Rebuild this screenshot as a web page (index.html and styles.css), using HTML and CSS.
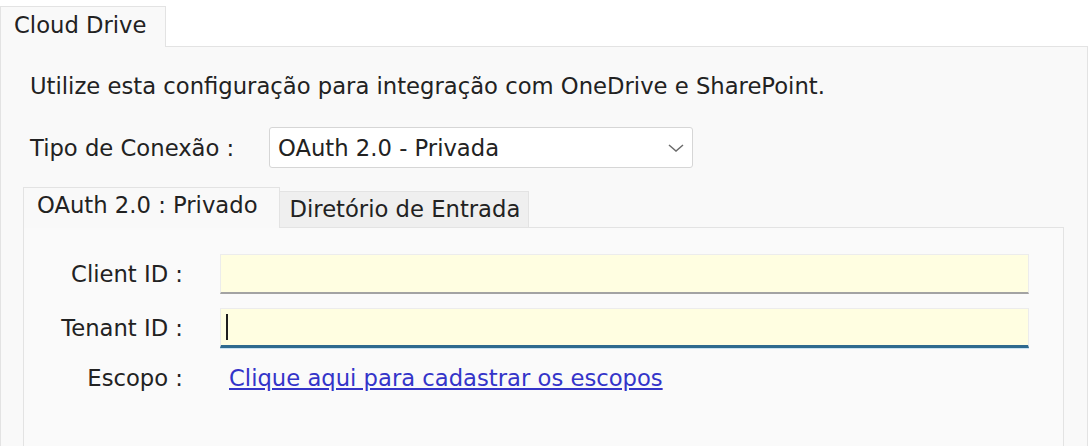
FILE: index.html
```html
<!DOCTYPE html>
<html lang="pt">
<head>
<meta charset="utf-8">
<title>Cloud Drive</title>
<link rel="stylesheet" href="styles.css">
</head>
<body>
<div class="page">
  <div class="outer">
    <div class="tabbar">
      <div class="tab">Cloud Drive</div>
      <div class="tab-fill"></div>
    </div>
    <div class="panel">
      <p class="desc">Utilize esta configuração para integração com OneDrive e SharePoint.</p>
      <div class="conn-row">
        <span class="conn-label">Tipo de Conexão :</span>
        <div class="select">
          <span>OAuth 2.0 - Privada</span>
          <svg class="chev" width="16" height="8" viewBox="0 0 16 8"><polyline points="1,1 8,7 15,1" fill="none" stroke="#6b6b6b" stroke-width="1.5"/></svg>
        </div>
      </div>
      <div class="inner">
        <div class="inner-tabbar">
          <div class="itab itab-active">OAuth 2.0 : Privado</div>
          <div class="itab itab-idle">Diretório de Entrada</div>
          <div class="itab-fill"></div>
        </div>
        <div class="inner-panel">
          <div class="form">
            <label class="flabel">Client ID :</label>
            <div class="field"></div>
            <label class="flabel">Tenant ID :</label>
            <div class="field field-focus"><span class="caret"></span></div>
            <label class="flabel flabel-link">Escopo :</label>
            <a class="link" href="#">Clique aqui para cadastrar os escopos</a>
          </div>
        </div>
      </div>
    </div>
  </div>
</div>
</body>
</html>
```

FILE: styles.css
```css
html, body {
  margin: 0;
  padding: 0;
  background: #ffffff;
}
body {
  font-family: "DejaVu Sans", Verdana, sans-serif;
  font-size: 22.7px;
  line-height: 26px;
  color: #222222;
}
.page {
  padding-top: 6px;
  height: 440px;
  overflow: hidden;
}
.outer {
  width: 1088px;
}
.tabbar {
  display: flex;
}
.tab {
  border: 1px solid #e3e3e3;
  border-bottom: none;
  background: #f9f9f9;
  padding: 5px 18px 9px 13px;
  white-space: nowrap;
}
.tab-fill {
  flex: 1;
  border-bottom: 1px solid #e3e3e3;
}
.panel {
  border: 1px solid #e3e3e3;
  border-top: none;
  background: #f9f9f9;
  padding: 26px 23px 0 22px;
  height: 420px;
}
.desc {
  margin: 0 0 28px;
  padding-left: 7px;
}
.conn-row {
  display: flex;
  align-items: center;
  padding-left: 7px;
}
.conn-label {
  width: 239px;
  white-space: nowrap;
}
.select {
  box-sizing: border-box;
  width: 424px;
  height: 41px;
  border: 1px solid #d6d6d6;
  border-radius: 3px;
  background: #ffffff;
  display: flex;
  align-items: center;
  justify-content: space-between;
  padding: 0 8px;
}
.chev {
  display: block;
}
.inner {
  margin-top: 19px;
}
.inner-tabbar {
  display: flex;
  align-items: flex-end;
}
.itab {
  white-space: nowrap;
  border: 1px solid #e3e3e3;
}
.itab-active {
  border-bottom: none;
  background: #f9f9f9;
  padding: 4px 21px 10px 13px;
}
.itab-idle {
  border-left: none;
  background: #efefef;
  padding: 4px 8px 5px 10px;
}
.itab-fill {
  flex: 1;
  align-self: stretch;
  border-bottom: 1px solid #e3e3e3;
}
.inner-panel {
  border: 1px solid #e3e3e3;
  border-top: none;
  background: #fafafa;
  padding: 26px 34px 0 0;
  height: 200px;
}
.form {
  display: grid;
  grid-template-columns: 159px 1fr;
  column-gap: 37px;
  row-gap: 14px;
  align-items: center;
}
.flabel {
  text-align: right;
  white-space: nowrap;
}
.flabel-link {
  margin-top: 3px;
}
.field {
  box-sizing: border-box;
  height: 40px;
  background: #fffee1;
  border: 1px solid #ececec;
  border-bottom: 2px solid #a3a3a3;
}
.field-focus {
  border-bottom: 3px solid #2f6a8e;
  box-shadow: 0 1px 0 #c9e3f2;
  display: flex;
  align-items: center;
  padding-left: 5px;
}
.caret {
  display: block;
  width: 2px;
  height: 26px;
  background: #1e1e1e;
}
.link {
  justify-self: start;
  margin-top: 3px;
  margin-left: 9px;
  color: #3434c9;
  text-decoration: underline;
  white-space: nowrap;
}
```
